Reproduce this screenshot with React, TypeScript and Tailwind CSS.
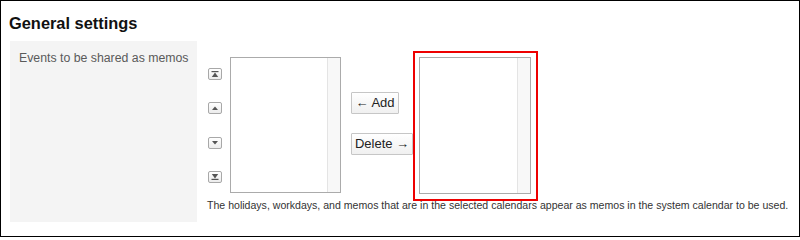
import React from "react";

function IconBtn({ kind }: { kind: "top" | "up" | "down" | "bottom" }) {
  return (
    <div className="w-[14px] h-[12px] border border-[#a8a8a8] rounded-[2px] bg-gradient-to-b from-white to-[#ececec] flex items-center justify-center">
      <svg width="8" height="7" viewBox="0 0 8 7" className="block">
        {kind === "top" && (
          <g fill="#555">
            <rect x="0.5" y="0" width="7" height="1.2" />
            <path d="M4 1.6 L7.2 6 L0.8 6 Z" />
          </g>
        )}
        {kind === "up" && (
          <g fill="#555">
            <path d="M4 1.5 L7 5 L1 5 Z" />
          </g>
        )}
        {kind === "down" && (
          <g fill="#555">
            <path d="M1 2 L7 2 L4 5.5 Z" />
          </g>
        )}
        {kind === "bottom" && (
          <g fill="#555">
            <path d="M0.8 1 L7.2 1 L4 5.4 Z" />
            <rect x="0.5" y="5.8" width="7" height="1.2" />
          </g>
        )}
      </svg>
    </div>
  );
}

function ListBox({ w, h }: { w: string; h: string }) {
  return (
    <div className={`${w} ${h} border border-[#ababab] bg-white flex justify-end`}>
      <div className="w-[13px] h-full border-l border-[#e4e4e4] bg-[#f8f8f8]" />
    </div>
  );
}

export default function App() {
  return (
    <div className="w-[800px] h-[237px] border border-black bg-white overflow-hidden font-['Liberation_Sans',Arial,sans-serif]">
      <h1 className="pl-[8px] pt-[10px] text-[16.4px] leading-[24px] font-bold text-[#111]">
        General settings
      </h1>
      <div className="flex ml-[9px] mt-[6px]">
        <div className="shrink-0 w-[187px] h-[181px] bg-[#f4f4f4] pl-[9px] pt-[9px] text-[12.3px] leading-[16px] text-[#5a5a5a] whitespace-nowrap">
          Events to be shared as memos
        </div>
        <div className="flex-1 min-w-0 pl-[10px] pt-[16px]">
          <div className="flex items-start">
            <div className="shrink-0 ml-[1px] w-[14px] h-[136px] pt-[11px] pb-[10px] flex flex-col justify-between">
              <IconBtn kind="top" />
              <IconBtn kind="up" />
              <IconBtn kind="down" />
              <IconBtn kind="bottom" />
            </div>
            <div className="shrink-0 ml-[8px]">
              <ListBox w="w-[111px]" h="h-[136px]" />
            </div>
            <div className="shrink-0 ml-[10px] mt-[35px] flex flex-col items-start gap-[19px]">
              <button className="w-[48px] h-[22px] border border-[#c6c6c6] rounded-[1px] bg-gradient-to-b from-white to-[#f0f0f0] text-[13px] leading-[20px] text-[#222] flex items-center justify-center">
                ← Add
              </button>
              <button className="w-[62px] h-[22px] border border-[#c6c6c6] rounded-[1px] bg-gradient-to-b from-white to-[#f0f0f0] text-[13px] leading-[20px] text-[#222] flex items-center justify-center">
                Delete →
              </button>
            </div>
            <div className="shrink-0 relative ml-[6px]">
              <ListBox w="w-[112px]" h="h-[137px]" />
              <div className="absolute -left-[6px] -top-[6px] -right-[7px] -bottom-[7px] border-2 border-[#ee0000]" />
            </div>
          </div>
          <p className="mt-[4px] text-[10.57px] leading-[14px] text-[#333] whitespace-nowrap">
            The holidays, workdays, and memos that are in the selected calendars appear as memos in the system calendar to be used.
          </p>
        </div>
      </div>
    </div>
  );
}
